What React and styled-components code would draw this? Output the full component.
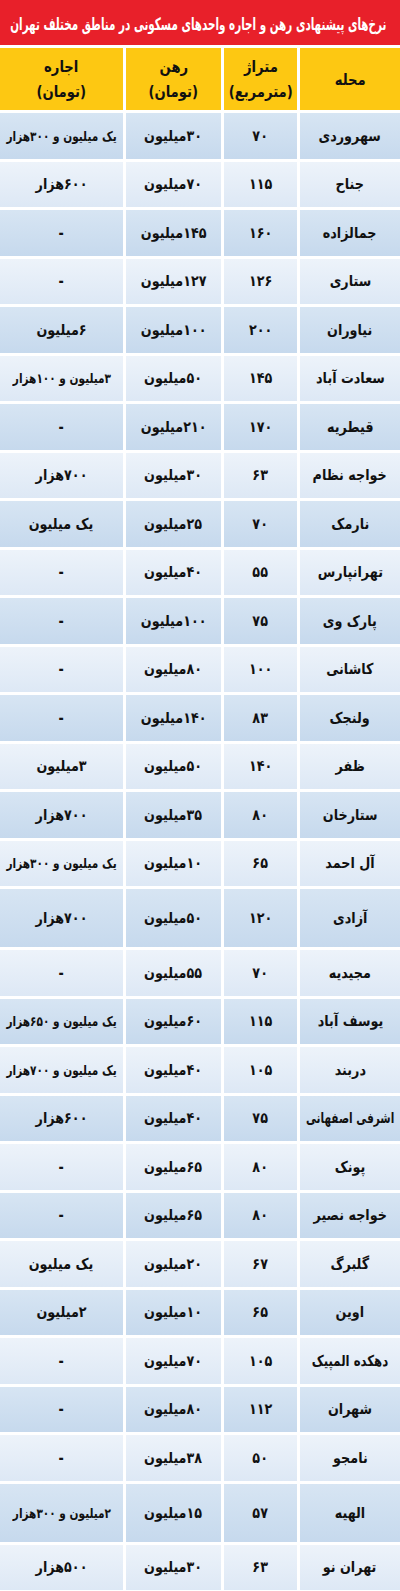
import React from 'react';
import styled, { createGlobalStyle } from 'styled-components';

const GlobalStyle = createGlobalStyle`
  html, body {
    margin: 0;
    padding: 0;
    background: #ffffff;
  }
  body {
    font-family: "DejaVu Sans", sans-serif;
  }
`;

const Page = styled.div`
  width: 400px;
  direction: rtl;
  background: #ffffff;
  overflow: hidden;
`;

const TitleBar = styled.div`
  height: 45px;
  background: #e8202a;
  color: #ffffff;
  font-weight: bold;
  font-size: 17px;
  display: flex;
  align-items: center;
  justify-content: center;
  padding: 2px 4px 0 0;
  box-sizing: border-box;
  white-space: nowrap;
`;

// the source uses a narrow Persian face; squeeze DejaVu horizontally to match
const Squeeze = styled.span`
  display: inline-block;
  flex-shrink: 0;
  white-space: nowrap;
  transform: scaleX(${p => p.$k});
  transform-origin: center;
`;

const Table = styled.div`
  display: grid;
  grid-template-columns: 100px 73px 95px 123px;
  column-gap: 3px;
  row-gap: 3px;
  padding-top: 3px;
  background: #ffffff;
`;

const HeadCell = styled.div`
  height: 62px;
  background: #fdc812;
  color: #111111;
  font-weight: bold;
  font-size: 15.5px;
  line-height: 25px;
  display: flex;
  flex-direction: column;
  align-items: center;
  justify-content: center;
  text-align: center;
  padding-top: 2px;
  box-sizing: border-box;
`;

const Cell = styled.div`
  height: ${p => (p.$tall ? 58 : 45.5)}px;
  background: ${p =>
    p.$dark
      ? 'linear-gradient(to bottom, #d7e5f3, #c6d9ed)'
      : 'linear-gradient(to bottom, #edf3fa, #dde8f5)'};
  color: #111111;
  font-weight: bold;
  font-size: ${p => (p.$small ? 13.5 : 15)}px;
  display: flex;
  align-items: center;
  justify-content: center;
  white-space: nowrap;
`;

const rows = [
  ['سهروردی', '۷۰', '۳۰میلیون', 'یک میلیون و ۳۰۰هزار'],
  ['جناح', '۱۱۵', '۷۰میلیون', '۶۰۰هزار'],
  ['جمالزاده', '۱۶۰', '۱۴۵میلیون', '-'],
  ['ستاری', '۱۲۶', '۱۲۷میلیون', '-'],
  ['نیاوران', '۲۰۰', '۱۰۰میلیون', '۶میلیون'],
  ['سعادت آباد', '۱۴۵', '۵۰میلیون', '۳میلیون و ۱۰۰هزار'],
  ['قیطریه', '۱۷۰', '۲۱۰میلیون', '-'],
  ['خواجه نظام', '۶۳', '۳۰میلیون', '۷۰۰هزار'],
  ['نارمک', '۷۰', '۲۵میلیون', 'یک میلیون'],
  ['تهرانپارس', '۵۵', '۴۰میلیون', '-'],
  ['پارک وی', '۷۵', '۱۰۰میلیون', '-'],
  ['کاشانی', '۱۰۰', '۸۰میلیون', '-'],
  ['ولنجک', '۸۳', '۱۴۰میلیون', '-'],
  ['ظفر', '۱۴۰', '۵۰میلیون', '۳میلیون'],
  ['ستارخان', '۸۰', '۳۵میلیون', '۷۰۰هزار'],
  ['آل احمد', '۶۵', '۱۰میلیون', 'یک میلیون و ۳۰۰هزار'],
  ['آزادی', '۱۲۰', '۵۰میلیون', '۷۰۰هزار'],
  ['مجیدیه', '۷۰', '۵۵میلیون', '-'],
  ['یوسف آباد', '۱۱۵', '۶۰میلیون', 'یک میلیون و ۶۵۰هزار'],
  ['دربند', '۱۰۵', '۴۰میلیون', 'یک میلیون و ۷۰۰هزار'],
  ['اشرفی اصفهانی', '۷۵', '۴۰میلیون', '۶۰۰هزار'],
  ['پونک', '۸۰', '۶۵میلیون', '-'],
  ['خواجه نصیر', '۸۰', '۶۵میلیون', '-'],
  ['گلبرگ', '۶۷', '۲۰میلیون', 'یک میلیون'],
  ['اوین', '۶۵', '۱۰میلیون', '۲میلیون'],
  ['دهکده المپیک', '۱۰۵', '۷۰میلیون', '-'],
  ['شهران', '۱۱۲', '۸۰میلیون', '-'],
  ['نامجو', '۵۰', '۳۸میلیون', '-'],
  ['الهیه', '۵۷', '۱۵میلیون', '۲میلیون و ۳۰۰هزار'],
  ['تهران نو', '۶۳', '۳۰میلیون', '۵۰۰هزار'],
];

const tallRows = [16, 28];

// horizontal squeeze per cell: long rent strings and long place names need more
function squeezeFor(v, j) {
  if (j === 3 && v.length > 14) return 0.78;
  if (j === 3 && v.length > 12) return 0.84;
  if (j === 0 && v.length > 12) return 0.7;
  if (j === 0 && v.length > 11) return 0.78;
  return 0.85;
}

export default function App() {
  return (
    <Page>
      <GlobalStyle />
      <TitleBar>
        <Squeeze $k={0.61}>نرخ‌های پیشنهادی رهن و اجاره واحدهای مسکونی در مناطق مختلف تهران</Squeeze>
      </TitleBar>
      <Table>
        <HeadCell>
          <Squeeze $k={0.85}>محله</Squeeze>
        </HeadCell>
        <HeadCell>
          <Squeeze $k={0.85}>متراژ</Squeeze>
          <Squeeze $k={0.85}>(مترمربع)</Squeeze>
        </HeadCell>
        <HeadCell>
          <Squeeze $k={0.85}>رهن</Squeeze>
          <Squeeze $k={0.85}>(تومان)</Squeeze>
        </HeadCell>
        <HeadCell>
          <Squeeze $k={0.85}>اجاره</Squeeze>
          <Squeeze $k={0.85}>(تومان)</Squeeze>
        </HeadCell>
        {rows.map((r, i) =>
          r.map((v, j) => (
            <Cell
              key={i + '-' + j}
              $dark={i % 2 === 0}
              $tall={tallRows.includes(i)}
              $small={j === 3 && v.length > 14}
            >
              <Squeeze $k={squeezeFor(v, j)}>{v}</Squeeze>
            </Cell>
          ))
        )}
      </Table>
    </Page>
  );
}
